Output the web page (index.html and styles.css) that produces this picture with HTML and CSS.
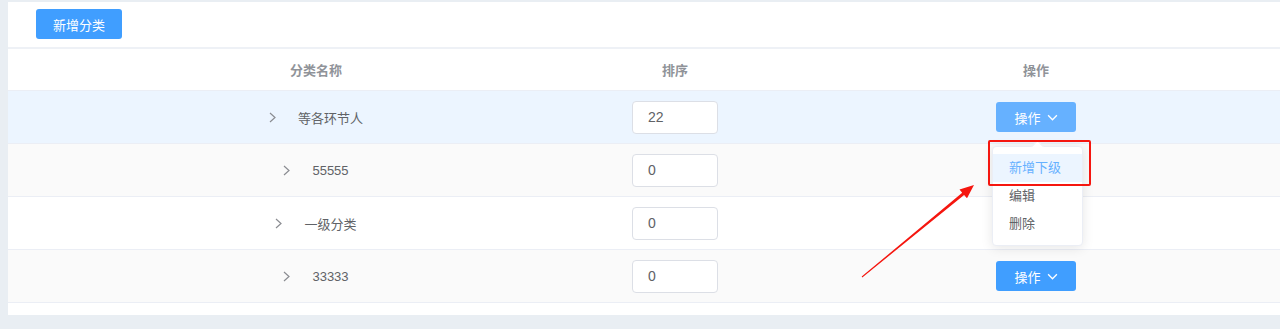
FILE: index.html
```html
<!DOCTYPE html>
<html lang="zh-CN">
<head>
    <meta charset="UTF-8">
    <title>分类管理</title>
    <link rel="stylesheet" href="styles.css">
</head>
<body>
    <div class="panel">
        <div class="toolbar">
            <button class="btn btn-primary">新增分类</button>
        </div>

        <div class="table">
            <div class="row row-head">
                <div class="cell">分类名称</div>
                <div class="cell">排序</div>
                <div class="cell">操作</div>
            </div>

            <div class="row row-hover">
                <div class="cell">
                    <span class="expand"><svg viewBox="0 0 7 11"><path d="M1 1 L6 5.5 L1 10"/></svg></span>
                    <span>等各环节人</span>
                </div>
                <div class="cell"><input class="sort-input" type="text" value="22"></div>
                <div class="cell"><button class="btn btn-op btn-op-active">操作<svg class="caret" viewBox="0 0 10 6"><path d="M1 1 L5 5 L9 1"/></svg></button></div>
            </div>

            <!-- the open menu covers the buttons of the next two rows -->
            <div class="row row-striped">
                <div class="cell">
                    <span class="expand"><svg viewBox="0 0 7 11"><path d="M1 1 L6 5.5 L1 10"/></svg></span>
                    <span>55555</span>
                </div>
                <div class="cell"><input class="sort-input" type="text" value="0"></div>
                <div class="cell"></div>
            </div>

            <div class="row">
                <div class="cell">
                    <span class="expand"><svg viewBox="0 0 7 11"><path d="M1 1 L6 5.5 L1 10"/></svg></span>
                    <span>一级分类</span>
                </div>
                <div class="cell"><input class="sort-input" type="text" value="0"></div>
                <div class="cell"></div>
            </div>

            <div class="row row-striped">
                <div class="cell">
                    <span class="expand"><svg viewBox="0 0 7 11"><path d="M1 1 L6 5.5 L1 10"/></svg></span>
                    <span>33333</span>
                </div>
                <div class="cell"><input class="sort-input" type="text" value="0"></div>
                <div class="cell"><button class="btn btn-op">操作<svg class="caret" viewBox="0 0 10 6"><path d="M1 1 L5 5 L9 1"/></svg></button></div>
            </div>
        </div>

        <ul class="dropdown">
            <li class="dropdown-item is-hover">新增下级</li>
            <li class="dropdown-item">编辑</li>
            <li class="dropdown-item">删除</li>
        </ul>

        <!-- annotation -->
        <div class="mark"></div>
        <svg class="pointer" viewBox="0 0 130 105">
            <polygon points="3.7,96.6 104.2,12.7 101.5,9.6 116,5 109,18.2 106.1,15.1 4.3,97.4"/>
        </svg>
    </div>
</body>
</html>
```

FILE: styles.css
```css
body {
    margin: 0;
    padding: 2px 0 14px 8px;
    background-color: #e9eef3;
    font-family: "Liberation Sans", "Noto Sans CJK SC", sans-serif;
    font-size: 13px;
    color: #606266;
}

.panel {
    position: relative;
    height: 313px;
    background-color: #fff;
    overflow: hidden;
}

.toolbar {
    height: 47px;
    padding: 7px 0 0 28px;
    box-sizing: border-box;
    border-bottom: 2px solid #eef1f6;
}

.btn {
    border: none;
    border-radius: 3px;
    font-family: inherit;
    font-size: 13px;
    color: #fff;
    cursor: pointer;
}

.btn-primary {
    width: 86px;
    height: 30px;
    background-color: #409eff;
}

.table {
    width: 1338px;
}

.row {
    display: grid;
    grid-template-columns: 616px 102px 620px;
    height: 53px;
    border-bottom: 1px solid #ebeef5;
    box-sizing: border-box;
}

.row-head {
    height: 42px;
    color: #909399;
    font-weight: bold;
}

.row-hover {
    background-color: #ecf5ff;
}

.row-striped {
    background-color: #fafafa;
}

.cell {
    display: flex;
    justify-content: center;
    align-items: center;
}

.expand {
    display: inline-flex;
    width: 7px;
    height: 11px;
    margin-right: 22px;
}

.expand svg {
    width: 7px;
    height: 11px;
    fill: none;
    stroke: #8a8c91;
    stroke-width: 1.2;
}

.sort-input {
    width: 86px;
    height: 33px;
    padding: 0 15px;
    box-sizing: border-box;
    border: 1px solid #dcdfe6;
    border-radius: 4px;
    background-color: #fff;
    font-family: inherit;
    font-size: 14px;
    color: #606266;
    outline: none;
}

.btn-op {
    display: inline-flex;
    align-items: center;
    justify-content: center;
    width: 80px;
    height: 30px;
    background-color: #409eff;
}

.btn-op-active {
    background-color: #66b1ff;
}

.caret {
    width: 11px;
    height: 7px;
    margin-left: 6px;
    fill: none;
    stroke: #fff;
    stroke-width: 1.2;
}

.dropdown {
    position: absolute;
    left: 984px;
    top: 144px;
    width: 89px;
    margin: 0;
    padding: 7px 0;
    list-style: none;
    background-color: #fff;
    border: 1px solid #ebeef5;
    border-radius: 4px;
    box-shadow: 0 2px 12px rgba(0, 0, 0, 0.1);
}

.dropdown::before {
    content: "";
    position: absolute;
    left: 40px;
    top: -5px;
    width: 8px;
    height: 8px;
    background-color: #fff;
    border-left: 1px solid #ebeef5;
    border-top: 1px solid #ebeef5;
    transform: rotate(45deg);
}

.dropdown-item {
    padding-left: 16px;
    line-height: 28px;
    white-space: nowrap;
}

.dropdown-item.is-hover {
    background-color: #ecf5ff;
    color: #66b1ff;
}

.mark {
    position: absolute;
    left: 980px;
    top: 138px;
    width: 103px;
    height: 46px;
    box-sizing: border-box;
    border: 2px solid #f5160f;
    border-radius: 2px;
}

.pointer {
    position: absolute;
    left: 850px;
    top: 178px;
    width: 130px;
    height: 105px;
    fill: #f5160f;
}
```
